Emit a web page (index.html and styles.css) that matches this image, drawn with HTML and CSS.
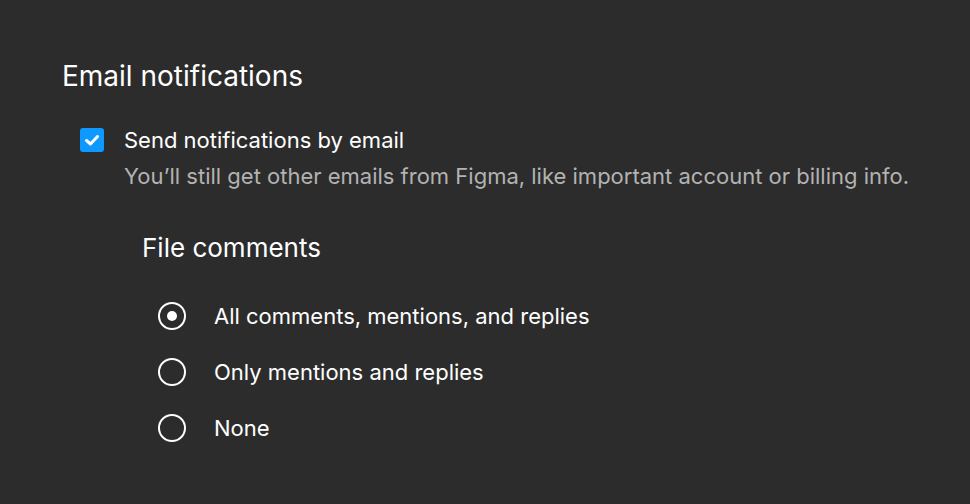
FILE: index.html
```html
<!DOCTYPE html>
<html>
<head>
<meta charset="utf-8">
<link rel="stylesheet" href="styles.css">
</head>
<body>
<div class="panel">
  <h1 class="title">Email notifications</h1>
  <div class="check-row">
    <span class="checkbox">
      <svg width="24" height="24" viewBox="0 0 24 24"><path d="M6.5 12.5 L10.5 16 L17.5 8.5" fill="none" stroke="#fff" stroke-width="3" stroke-linecap="round" stroke-linejoin="round"/></svg>
    </span>
    <div class="check-text">
      <div class="label">Send notifications by email</div>
      <div class="desc">You’ll still get other emails from Figma, like important account or billing info.</div>
    </div>
  </div>
  <div class="sub">
    <h2 class="subtitle">File comments</h2>
    <div class="radios">
      <div class="radio-row"><span class="radio checked"></span><span class="label">All comments, mentions, and replies</span></div>
      <div class="radio-row"><span class="radio"></span><span class="label">Only mentions and replies</span></div>
      <div class="radio-row"><span class="radio"></span><span class="label">None</span></div>
    </div>
  </div>
</div>
</body>
</html>
```
FILE: styles.css
```css
html, body {
  margin: 0;
  padding: 0;
  background: #2c2c2c;
  width: 970px;
  height: 504px;
  overflow: hidden;
}
body {
  font-family: Inter, "Noto Sans", sans-serif;
  color: #ffffff;
}
.panel {
  padding: 58px 0 0 62px;
}
.title {
  margin: 0;
  font-size: 28px;
  font-weight: 400;
  line-height: 36px;
}
.check-row {
  display: flex;
  margin-top: 34px;
  margin-left: 18px;
  gap: 20px;
}
.checkbox {
  width: 24px;
  height: 24px;
  border-radius: 3px;
  background: #0d99ff;
  flex: none;
  display: block;
}
.checkbox svg { display: block; }
.label {
  font-size: 22px;
  line-height: 24px;
}
.desc {
  font-size: 22px;
  line-height: 24px;
  margin-top: 12px;
  color: #b3b3b3;
}
.sub {
  margin-left: 80px;
  margin-top: 42px;
}
.subtitle {
  margin: 0;
  font-size: 26px;
  font-weight: 400;
  line-height: 36px;
}
.radios {
  margin-top: 36px;
  display: flex;
  flex-direction: column;
  gap: 28px;
}
.radio-row {
  display: flex;
  align-items: center;
  margin-left: 16px;
  gap: 28px;
  height: 28px;
}
.radio {
  width: 28px;
  height: 28px;
  box-sizing: border-box;
  border: 2px solid #ffffff;
  border-radius: 50%;
  flex: none;
  display: flex;
  align-items: center;
  justify-content: center;
}
.radio.checked::after {
  content: "";
  width: 10px;
  height: 10px;
  border-radius: 50%;
  background: #ffffff;
}
```
